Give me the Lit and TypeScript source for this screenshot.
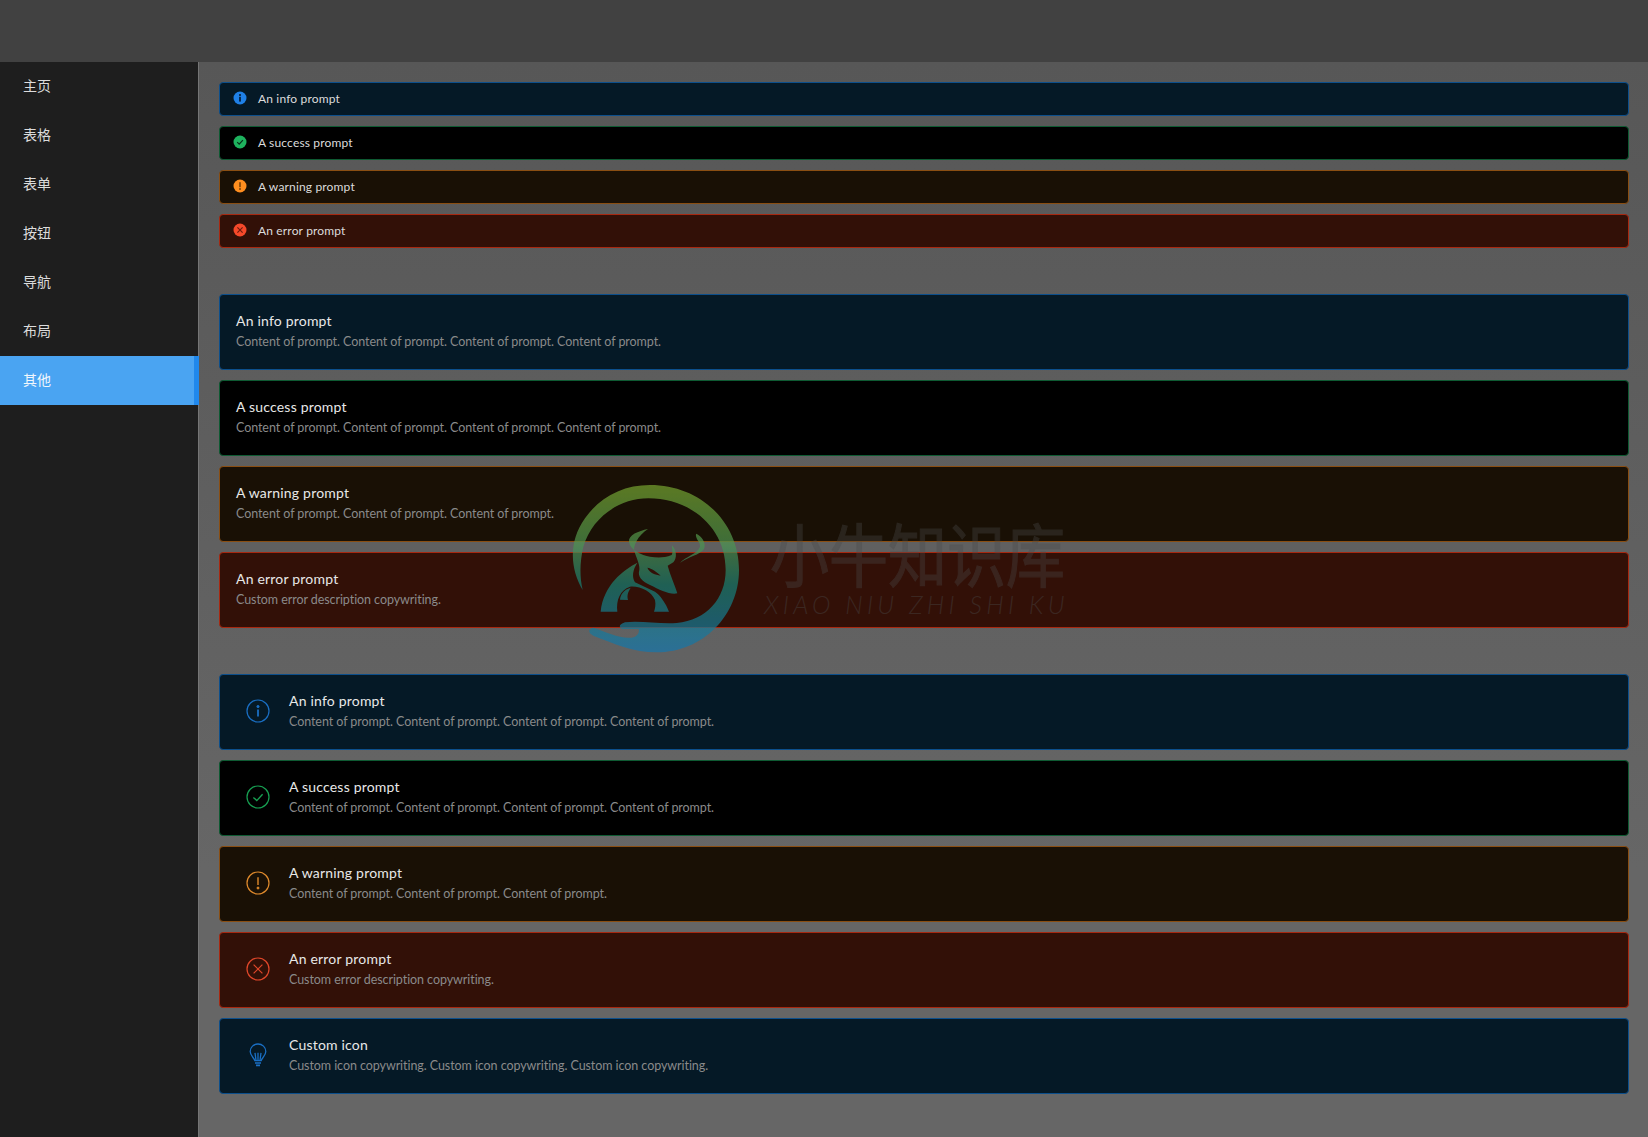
import { LitElement, html, css, svg } from "lit";
import { customElement } from "lit/decorators.js";

type Kind = "info" | "success" | "warning" | "error";
const LONG = "Content of prompt. Content of prompt. Content of prompt. Content of prompt.";
const MID = "Content of prompt. Content of prompt. Content of prompt.";
const ERR = "Custom error description copywriting.";
const NAMES: Record<Kind, string> = { info: "An info prompt", success: "A success prompt", warning: "A warning prompt", error: "An error prompt" };
const DESCS: Record<Kind, string> = { info: LONG, success: LONG, warning: MID, error: ERR };
const KINDS: Kind[] = ["info", "success", "warning", "error"];
const NAV = ["主页", "表格", "表单", "按钮", "导航", "布局", "其他"];

function solidIcon(k: Kind) {
  const marks = {
    info: svg`<circle cx="7" cy="4" r="1" fill="#04162a"/><rect x="6.2" y="5.8" width="1.6" height="4.8" fill="#04162a"/>`,
    success: svg`<path d="M4.2 7.2 6.2 9.2 9.9 5.2" fill="none" stroke="#06301a" stroke-width="1.2"/>`,
    warning: svg`<rect x="6.2" y="3.2" width="1.6" height="5" fill="#7a4208"/><circle cx="7" cy="10" r="1" fill="#7a4208"/>`,
    error: svg`<path d="M4.4 4.4 9.6 9.6M9.6 4.4 4.4 9.6" stroke="#6a1a0c" stroke-width="1.1"/>`,
  };
  return html`<svg class="solid ${k}" viewBox="0 0 14 14"><circle cx="7" cy="7" r="6.5" fill="currentColor"/>${marks[k]}</svg>`;
}

function lineIcon(k: Kind) {
  const marks = {
    info: svg`<circle cx="12" cy="7.6" r="1.1" fill="currentColor"/><path d="M12 10.5V17.6" stroke-width="1.8"/>`,
    success: svg`<path d="M7.4 12.4 10.8 15.6 16.6 9.2" stroke-width="1.4"/>`,
    warning: svg`<path d="M12 6.2V14" stroke-width="1.4"/><circle cx="12" cy="17" r="1" fill="currentColor"/>`,
    error: svg`<path d="M7.6 7.6 16.4 16.4M16.4 7.6 7.6 16.4" stroke-width="1.2"/>`,
  };
  return html`<svg class="line ${k}" viewBox="0 0 24 24" fill="none" stroke="currentColor"><circle cx="12" cy="12" r="11" stroke-width="1.2"/>${marks[k]}</svg>`;
}

const bulb = html`<svg class="line info" viewBox="0 0 24 24" fill="none" stroke="currentColor" stroke-width="1.3"><path d="M8.8 17.6C8.4 15 4.2 13 4.2 8.6 4.2 4.2 7.7 1 12 1s7.8 3.2 7.8 7.6c0 4.4-4.2 6.4-4.6 9Z"/><path d="M10 17.4 9 9.8M14 17.4 15 9.8M12 9.8V17.4"/><path d="M9 20H15M10 22.4H14" stroke-width="1.6"/></svg>`;

@customElement("app-root")
export class AppRoot extends LitElement {
  static styles = css`
    :host { display: block; position: relative; height: 1137px; overflow: hidden; font-family: Lato, "Noto Sans CJK SC", sans-serif; color: #e6e6e6; background: #5f5f5f; }
    .top { height: 62px; background: #414141; }
    .body { display: flex; height: 1075px; }
    .side { width: 198px; flex: none; background: #1e1e1e; border-right: 1px solid #757575; }
    .nav { height: 49px; box-sizing: border-box; display: flex; align-items: center; padding: 0 0 4px 23px; font-size: 14px; font-family: "Noto Sans CJK SC", sans-serif; color: #dcdcdc; }
    .nav.on { background: #4aa4f2; color: #f0f6fc; margin-right: -1px; border-right: 5px solid #2088ec; }
    .main { flex: 1; padding: 20px 19px 0 20px; background: linear-gradient(#575757, #666666 75%); }
    .group { display: flex; flex-direction: column; gap: 10px; margin-bottom: 46px; }
    .alert { border: 1px solid; border-radius: 4px; box-sizing: border-box; display: flex; }
    .alert.info { background: #051926; border-color: #0c4f8c; }
    .alert.success { background: #000; border-color: #0e5a32; }
    .alert.warning { background: #191005; border-color: #8a4e12; }
    .alert.error { background: #321007; border-color: #a82810; }
    .small { height: 34px; align-items: center; padding-left: 13px; font-size: 12px; letter-spacing: .16px; }
    .small span { margin: 0 0 2px 11px; }
    .big { height: 76px; flex-direction: column; justify-content: center; padding: 0 0 3px 16px; }
    .big.icon { flex-direction: row; align-items: center; justify-content: flex-start; padding-left: 26px; }
    .big .txt { margin-left: 19px; }
    .title { font-size: 14px; letter-spacing: .2px; line-height: 22px; color: #e8e8e8; }
    .desc { font-size: 12.5px; letter-spacing: -.07px; line-height: 20px; color: #8a8a8a; }
    svg.solid { width: 14px; height: 14px; flex: none; margin-bottom: 2px; }
    svg.line { width: 24px; height: 24px; flex: none; }
    .info { color: #1f80e6; }
    .success { color: #1eb25e; }
    .warning { color: #ff8e1f; }
    .error { color: #f5492a; }
    .alert.small, .alert.big { color: #dcdcdc; }
    svg.line.info { color: #1a6fc4; }
    svg.line.success { color: #17a052; }
    svg.line.warning { color: #e08a2c; }
    svg.line.error { color: #e0472a; }
    .mark { position: absolute; left: 560px; top: 475px; width: 190px; height: 190px; pointer-events: none; opacity: .7; }
    .wm-cn { position: absolute; left: 770px; top: 518px; font-family: "Noto Sans CJK SC", sans-serif; font-size: 69px; line-height: 69px; color: #4a4a4a; opacity: .35; -webkit-text-stroke: 1.2px #4a4a4a; transform: scaleX(.855); transform-origin: left top; white-space: nowrap; }
    .wm-en { position: absolute; left: 764px; top: 592px; font-family: Lato, sans-serif; font-style: italic; font-weight: 300; font-size: 25px; line-height: 24px; letter-spacing: 4.2px; color: #4a4a4a; opacity: .4; white-space: nowrap; }
  `;

  render() {
    return html`
      <div class="top"></div>
      <div class="body">
        <nav class="side">${NAV.map((n, i) => html`<div class="nav ${i === 6 ? "on" : ""}">${n}</div>`)}</nav>
        <main class="main">
          <section class="group">
            ${KINDS.map((k) => html`<div class="alert small ${k}">${solidIcon(k)}<span>${NAMES[k]}</span></div>`)}
          </section>
          <section class="group">
            ${KINDS.map((k) => html`<div class="alert big ${k}"><div class="title">${NAMES[k]}</div><div class="desc">${DESCS[k]}</div></div>`)}
          </section>
          <section class="group">
            ${KINDS.map((k) => html`<div class="alert big icon ${k}">${lineIcon(k)}<div class="txt"><div class="title">${NAMES[k]}</div><div class="desc">${DESCS[k]}</div></div></div>`)}
            <div class="alert big icon info">${bulb}<div class="txt"><div class="title">Custom icon</div><div class="desc">Custom icon copywriting. Custom icon copywriting. Custom icon copywriting.</div></div></div>
          </section>
        </main>
      </div>
      <svg class="mark" viewBox="0 0 570 570">
        <defs><linearGradient id="g" x1="0" y1="30" x2="0" y2="532" gradientUnits="userSpaceOnUse">
          <stop offset="0" stop-color="#78a630"/><stop offset=".35" stop-color="#4e9650"/><stop offset=".6" stop-color="#178276"/><stop offset="1" stop-color="#1576ad"/>
        </linearGradient></defs>
        <g fill="url(#g)" fill-rule="evenodd">
          <path d="M68 345C30 280 25 200 75 130C120 65 190 30 270 30C420 30 537 140 537 285C537 420 430 532 290 532C220 532 160 505 100 482C85 475 82 462 100 458C135 470 175 488 205 488C225 490 240 478 236 462L190 462C175 460 175 448 195 442C240 436 300 448 350 444C440 436 497 370 497 285C497 160 395 70 265 70C175 70 95 130 70 215C60 260 58 300 68 345Z"/>
          <path d="M264 162C235 168 205 180 207 200C210 225 245 240 270 245C290 248 310 250 335 240C340 232 335 220 336 211C350 225 352 250 340 262L323 272C330 300 345 330 352 355C330 360 300 345 270 330C245 318 232 305 238 285C240 272 232 255 225 235C215 215 235 180 264 162ZM262 278C275 280 290 290 302 302C285 298 270 295 262 278Z"/>
          <path d="M232 263C190 285 130 330 122 410L172 410C168 375 180 345 210 335C240 332 275 350 285 375C288 390 285 400 282 410L327 410C318 385 300 360 285 350L225 322C215 305 218 285 232 263Z"/>
          <path d="M212 338C190 345 182 358 180 374L204 375C200 360 205 350 212 338Z"/>
          <path d="M408 176C425 182 440 205 432 222C420 240 385 245 360 264C375 245 415 235 420 215C422 200 405 192 408 176Z"/>
        </g>
      </svg>
      <div class="wm-cn">小牛知识库</div>
      <div class="wm-en">XIAO NIU ZHI SHI KU</div>
    `;
  }
}
